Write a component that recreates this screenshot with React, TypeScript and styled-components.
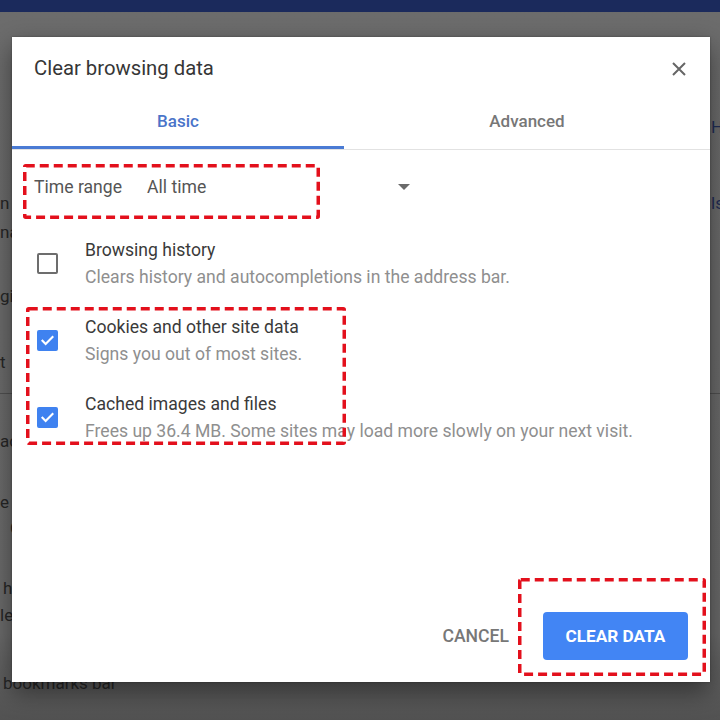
import React from "react";
import styled, { createGlobalStyle } from "styled-components";

const Global = createGlobalStyle`
  html, body { margin: 0; padding: 0; }
  body {
    width: 720px;
    height: 720px;
    overflow: hidden;
    font-family: Roboto, "Noto Sans", "Liberation Sans", Arial, sans-serif;
    background: #6b6b6b;
  }
  * { box-sizing: border-box; }
`;

/* ---------- dimmed page behind the dialog ---------- */

const Page = styled.div`
  position: relative;
  width: 720px;
  height: 720px;
  background: linear-gradient(#6c6c6c 0%, #6a6a6a 88%, #525252 100%);
  overflow: hidden;
`;

const NavBar = styled.div`
  height: 12px;
  background: #1b2a5c;
`;

const BgList = styled.div`
  display: flex;
  flex-direction: column;
`;

const BgRow = styled.div<{ $gap: number }>`
  margin-top: ${(p) => p.$gap}px;
  height: 26px;
  display: flex;
  align-items: center;
  justify-content: space-between;
  font-size: 17px;
  color: #262626;
  white-space: nowrap;
`;

const BgLeft = styled.span<{ $x?: number }>`
  padding-left: ${(p) => p.$x ?? 0}px;
`;

const BgRight = styled.span`
  color: #1f2c55;
  width: 10px;
  padding-left: 1px;
`;

const BgDivider = styled.div<{ $gap: number }>`
  margin-top: ${(p) => p.$gap}px;
  height: 1px;
  background: #505050;
`;

/* ---------- dialog ---------- */

const Dialog = styled.div`
  position: absolute;
  left: 12px;
  top: 37px;
  width: 698px;
  height: 645px;
  background: #fff;
  display: flex;
  flex-direction: column;
  box-shadow: 0 10px 24px rgba(0, 0, 0, 0.45), 0 0 2px rgba(0, 0, 0, 0.3);
`;

const Header = styled.div`
  height: 56px;
  display: flex;
  align-items: flex-start;
  justify-content: space-between;
  padding: 19px 22px 0 22px;
`;

const Title = styled.h1`
  margin: 0;
  font-size: 20.3px;
  line-height: 24px;
  font-weight: 400;
  color: #363636;
`;

const CloseButton = styled.button`
  border: 0;
  background: none;
  padding: 0;
  margin-top: 4px;
  width: 18px;
  height: 18px;
  display: flex;
  align-items: center;
  justify-content: center;
  color: #666;
`;

const Tabs = styled.div`
  display: flex;
  height: 57px;
  border-bottom: 1px solid #e2e2e2;
`;

const Tab = styled.div<{ $active?: boolean; $width?: number }>`
  flex: ${(p) => (p.$width ? `0 0 ${p.$width}px` : "1 1 auto")};
  display: flex;
  align-items: center;
  justify-content: center;
  font-size: 17px;
  font-weight: 500;
  color: ${(p) => (p.$active ? "#4a74c9" : "#777")};
  border-bottom: 3px solid ${(p) => (p.$active ? "#4a7bd4" : "transparent")};
  padding-top: 3px;
`;

const Body = styled.div`
  display: flex;
  flex-direction: column;
  padding: 13px 0 0 0;
`;

const TimeRow = styled.div`
  height: 48px;
  display: flex;
  align-items: center;
  padding-left: 22px;
  font-size: 17.6px;
  color: #555;
`;

const TimeLabel = styled.span`
  margin-right: 25px;
`;

const Select = styled.div`
  width: 267px;
  display: flex;
  align-items: center;
  justify-content: space-between;
  padding-right: 4px;
`;

const Arrow = styled.span`
  width: 0;
  height: 0;
  border-left: 6px solid transparent;
  border-right: 6px solid transparent;
  border-top: 6px solid #6a6a6a;
`;

const OptionList = styled.div`
  margin-top: 14px;
  display: flex;
  flex-direction: column;
`;

const OptionRow = styled.div`
  height: 77px;
  display: flex;
  align-items: center;
  padding-left: 25px;
`;

const Box = styled.span<{ $checked?: boolean }>`
  flex: 0 0 21px;
  width: 21px;
  height: 21px;
  margin-right: 27px;
  border-radius: 2px;
  border: 2px solid ${(p) => (p.$checked ? "#3f82f0" : "#6d6d6d")};
  background: ${(p) => (p.$checked ? "#3f82f0" : "#fff")};
  display: flex;
  align-items: center;
  justify-content: center;
`;

const OptionText = styled.div`
  display: flex;
  flex-direction: column;
`;

const OptionTitle = styled.div`
  font-size: 17.6px;
  line-height: 27px;
  color: #3a3a3a;
`;

const OptionSub = styled.div`
  font-size: 17.6px;
  line-height: 27px;
  color: #8f8f8f;
`;

const Spacer = styled.div`
  flex: 1;
`;

const Footer = styled.div`
  display: flex;
  align-items: center;
  justify-content: flex-end;
  padding: 0 22px 22px 0;
`;

const TextButton = styled.button`
  border: 0;
  background: none;
  font-family: inherit;
  font-size: 17.6px;
  font-weight: 500;
  color: #777;
  padding: 0 16px;
  height: 48px;
  margin-right: 18px;
`;

const PrimaryButton = styled.button`
  border: 0;
  border-radius: 4px;
  background: #4285f4;
  color: #fff;
  font-family: inherit;
  font-size: 17.2px;
  font-weight: 700;
  height: 48px;
  width: 145px;
  padding: 0;
`;

/* ---------- red dashed annotations over the screenshot ---------- */

const Mark = styled.svg<{ $l: number; $t: number }>`
  position: absolute;
  left: ${(p) => p.$l}px;
  top: ${(p) => p.$t}px;
  overflow: visible;
  pointer-events: none;
`;

function DashMark({ l, t, w, h }: { l: number; t: number; w: number; h: number }) {
  return (
    <Mark $l={l} $t={t} width={w} height={h}>
      <rect
        x={1.75}
        y={1.75}
        width={w - 3.5}
        height={h - 3.5}
        fill="none"
        stroke="#e3101c"
        strokeWidth={3.5}
        strokeDasharray="9 5"
        rx={1}
      />
    </Mark>
  );
}

function Check() {
  return (
    <svg width="15" height="15" viewBox="0 0 24 24">
      <path d="M4 12.5l5 5L20 6.5" fill="none" stroke="#fff" strokeWidth="3.4" strokeLinecap="square" />
    </svg>
  );
}

function CloseIcon() {
  return (
    <svg width="16" height="16" viewBox="0 0 16 16">
      <path d="M2 2L14 14M14 2L2 14" stroke="#666" strokeWidth="2" />
    </svg>
  );
}

const options = [
  { title: "Browsing history", sub: "Clears history and autocompletions in the address bar.", checked: false },
  { title: "Cookies and other site data", sub: "Signs you out of most sites.", checked: true },
  {
    title: "Cached images and files",
    sub: "Frees up 36.4 MB. Some sites may load more slowly on your next visit.",
    checked: true,
  },
];

export default function App() {
  return (
    <>
      <Global />
      <Page>
        <NavBar />
        <BgList>
          <BgRow $gap={102}>
            <BgLeft />
            <BgRight>H</BgRight>
          </BgRow>
          <BgRow $gap={50}>
            <BgLeft>n</BgLeft>
            <BgRight>ls</BgRight>
          </BgRow>
          <BgRow $gap={3}>
            <BgLeft>na</BgLeft>
          </BgRow>
          <BgRow $gap={38}>
            <BgLeft>gi</BgLeft>
          </BgRow>
          <BgRow $gap={40}>
            <BgLeft>t</BgLeft>
          </BgRow>
          <BgDivider $gap={18} />
          <BgRow $gap={34}>
            <BgLeft>ac</BgLeft>
          </BgRow>
          <BgRow $gap={35}>
            <BgLeft>e</BgLeft>
          </BgRow>
          <BgRow $gap={0}>
            <BgLeft $x={10}>C</BgLeft>
          </BgRow>
          <BgRow $gap={34}>
            <BgLeft $x={3}>h</BgLeft>
          </BgRow>
          <BgRow $gap={1}>
            <BgLeft>le</BgLeft>
          </BgRow>
          <BgRow $gap={42}>
            <BgLeft $x={3}>bookmarks bar</BgLeft>
          </BgRow>
        </BgList>

        <Dialog role="dialog" aria-label="Clear browsing data">
          <Header>
            <Title>Clear browsing data</Title>
            <CloseButton aria-label="Close">
              <CloseIcon />
            </CloseButton>
          </Header>
          <Tabs>
            <Tab $active $width={332}>Basic</Tab>
            <Tab>Advanced</Tab>
          </Tabs>
          <Body>
            <TimeRow>
              <TimeLabel>Time range</TimeLabel>
              <Select>
                <span>All time</span>
                <Arrow />
              </Select>
            </TimeRow>
            <OptionList>
              {options.map((o) => (
                <OptionRow key={o.title}>
                  <Box $checked={o.checked}>{o.checked && <Check />}</Box>
                  <OptionText>
                    <OptionTitle>{o.title}</OptionTitle>
                    <OptionSub>{o.sub}</OptionSub>
                  </OptionText>
                </OptionRow>
              ))}
            </OptionList>
          </Body>
          <Spacer />
          <Footer>
            <TextButton>CANCEL</TextButton>
            <PrimaryButton>CLEAR DATA</PrimaryButton>
          </Footer>

          <DashMark l={11} t={127} w={297} h={55} />
          <DashMark l={14} t={270} w={320} h={138} />
          <DashMark l={506} t={541} w={188} h={98} />
        </Dialog>
      </Page>
    </>
  );
}
